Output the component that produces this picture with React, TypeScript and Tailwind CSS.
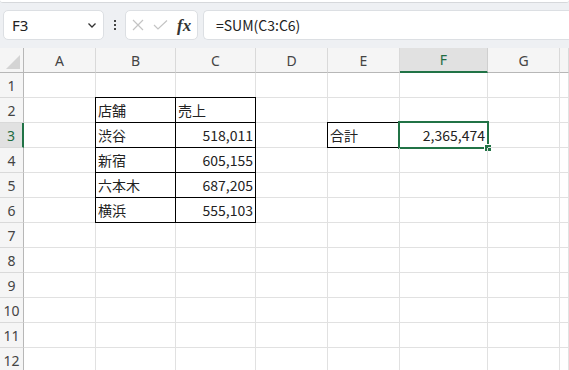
const cols = ['A', 'B', 'C', 'D', 'E', 'F', 'G', 'H']
const rows = [1, 2, 3, 4, 5, 6, 7, 8, 9, 10, 11, 12]

type Cell = { v: string; right?: boolean; box?: boolean }

const data: Record<string, Cell> = {
    B2: { v: '店舗', box: true },
    C2: { v: '売上', box: true },
    B3: { v: '渋谷', box: true },
    C3: { v: '518,011', right: true, box: true },
    B4: { v: '新宿', box: true },
    C4: { v: '605,155', right: true, box: true },
    B5: { v: '六本木', box: true },
    C5: { v: '687,205', right: true, box: true },
    B6: { v: '横浜', box: true },
    C6: { v: '555,103', right: true, box: true },
    E3: { v: '合計', box: true },
    F3: { v: '2,365,474', right: true, box: true },
}

const uiFont = { fontFamily: '"Noto Sans", "Open Sans", sans-serif' }
const cellFont = { fontFamily: '"Noto Sans CJK JP", "Noto Sans", sans-serif' }

function Toolbar() {
    return (
        <div className="h-[48px] bg-[#eef0f3] relative">
            <div className="absolute left-0 right-0 top-0 h-[3px] bg-white border-b border-[#d6d8db] rounded-b-[6px]" />
            <div className="flex items-start pt-[10px] pl-[3px] gap-0">
                <div className="w-[101px] h-[30px] bg-white border border-[#dcdfe3] rounded-[5px] flex items-center justify-between pl-[8px] pr-[5px]">
                    <span className="text-[15px] text-[#222] leading-none" style={uiFont}>F3</span>
                    <svg width="12" height="12" viewBox="0 0 12 12" fill="none" stroke="#333" strokeWidth="1.3">
                        <path d="M2.5 4.5 L6 8 L9.5 4.5" />
                    </svg>
                </div>
                <div className="w-[21px] h-[30px] flex flex-col items-center justify-center gap-[2px]">
                    <div className="w-[2px] h-[2px] bg-[#444]" />
                    <div className="w-[2px] h-[2px] bg-[#444]" />
                    <div className="w-[2px] h-[2px] bg-[#444]" />
                </div>
                <div className="w-[73px] h-[30px] bg-white border border-[#dcdfe3] rounded-[5px] flex items-center pl-[6px] gap-[9px]">
                    <svg width="12" height="12" viewBox="0 0 12 12" stroke="#c4c4c4" strokeWidth="1.2">
                        <path d="M1 1 L11 11 M11 1 L1 11" />
                    </svg>
                    <svg width="15" height="12" viewBox="0 0 15 12" fill="none" stroke="#c4c4c4" strokeWidth="1.2">
                        <path d="M1 6 L5 10 L14 1.5" />
                    </svg>
                    <span className="text-[17px] italic font-bold text-[#333] leading-none" style={{ fontFamily: '"Liberation Serif", serif' }}>
                        fx
                    </span>
                </div>
                <div className="ml-[5px] flex-1 h-[30px] bg-white border border-[#dcdfe3] rounded-l-[5px] border-r-0 flex items-center pl-[12px]">
                    <span className="text-[14px] text-[#222]" style={cellFont}>=SUM(C3:C6)</span>
                </div>
            </div>
        </div>
    )
}

export default function App() {
    return (
        <div className="w-[569px] h-[370px] overflow-hidden bg-white">
            <Toolbar />
            <div className="grid grid-cols-[24px_72px_80px_80px_72px_72px_88px_72px_1fr]">
                <div className="h-[25px] bg-[#f5f5f5] border-r border-b border-[#b7b7b7] relative">
                    <div
                        className="absolute right-[3px] bottom-[3px] w-[14px] h-[14px] bg-[#d4d4d4]"
                        style={{ clipPath: 'polygon(100% 0, 100% 100%, 0 100%)' }}
                    />
                </div>
                {cols.map((c) => (
                    <div
                        key={c}
                        className={
                            c === 'F'
                                ? 'h-[25px] bg-[#e1e1e1] border-r border-[#cfcfcf] border-b-[2px] border-b-[#217346] flex items-center justify-center text-[14px] text-[#1e6b41]'
                                : 'h-[25px] bg-[#f5f5f5] border-r border-[#d9d9d9] border-b border-b-[#b7b7b7] flex items-center justify-center text-[14px] text-[#444]'
                        }
                        style={uiFont}
                    >
                        {c === 'H' ? '' : c}
                    </div>
                ))}
                {rows.map((r) => (
                    <div key={r} className="contents">
                        <div
                            className={
                                r === 3
                                    ? 'h-[25px] bg-[#e1e1e1] border-r-[2px] border-r-[#217346] border-b border-b-[#d9d9d9] flex items-center justify-center text-[14px] text-[#1e6b41]'
                                    : 'h-[25px] bg-[#f5f5f5] border-r border-r-[#b7b7b7] border-b border-b-[#d9d9d9] flex items-center justify-center text-[14px] text-[#444]'
                            }
                            style={uiFont}
                        >
                            {r}
                        </div>
                        {cols.map((c) => {
                            const cell = data[c + r]
                            return (
                                <div
                                    key={c}
                                    className={
                                        'h-[25px] border-r border-b border-[#e1e1e1] relative flex items-center text-[14px] text-[#222] ' +
                                        (cell?.right ? 'justify-end pr-[2px]' : 'pl-[2px]')
                                    }
                                    style={cellFont}
                                >
                                    {cell?.box && <div className="absolute -inset-px border border-black pointer-events-none" />}
                                    {cell && <span className="relative whitespace-nowrap">{cell.v}</span>}
                                    {c + r === 'F3' && (
                                        <div className="absolute -left-[2px] -top-[2px] -right-[2px] -bottom-[2px] border-2 border-[#217346]">
                                            <div className="absolute -right-[5px] -bottom-[5px] w-[8px] h-[8px] bg-[#217346] border border-white" />
                                        </div>
                                    )}
                                </div>
                            )
                        })}
                    </div>
                ))}
            </div>
        </div>
    )
}
